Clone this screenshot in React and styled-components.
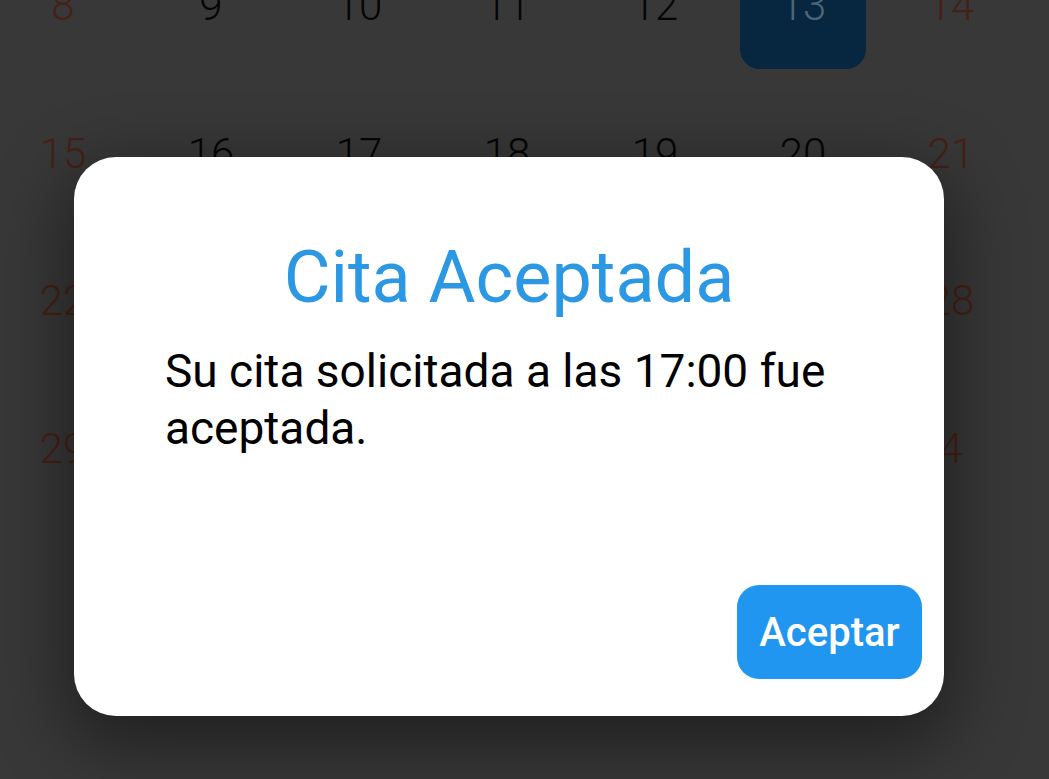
import React from "react";
import styled, { createGlobalStyle } from "styled-components";

const GlobalStyle = createGlobalStyle`
  html, body {
    margin: 0;
    padding: 0;
    background: #383838;
    overflow: hidden;
  }
  * { box-sizing: border-box; }
`;

const Screen = styled.div`
  position: relative;
  width: 1049px;
  height: 779px;
  overflow: hidden;
  background: #383838;
  font-family: Roboto, "Noto Sans", sans-serif;
`;

const Calendar = styled.div`
  display: grid;
  grid-template-columns: repeat(7, 148px);
  grid-auto-rows: 147.5px;
  margin: -68px 0 0 -11px;
`;

const Cell = styled.div`
  display: flex;
  align-items: center;
  justify-content: center;
`;

const Day = styled.div`
  width: 126px;
  height: 126px;
  display: flex;
  align-items: center;
  justify-content: center;
  border-radius: 20px;
  font-size: 42px;
  font-weight: 300;
  background: ${p => (p.selected ? "#072640" : "transparent")};
  color: ${p =>
    p.selected ? "#4d6577" : p.weekend ? "#462016" : "#050505"};
`;

const Dialog = styled.div`
  position: absolute;
  left: 74px;
  top: 157px;
  width: 870px;
  height: 559px;
  background: #ffffff;
  border-radius: 42px;
  box-shadow: 0 22px 70px 10px rgba(0, 0, 0, 0.42);
  display: flex;
  flex-direction: column;
  padding: 78px 22px 37px 91px;
`;

const Title = styled.h1`
  margin: 0 69px 0 0;
  font-size: 72px;
  line-height: 86px;
  font-weight: 400;
  color: #2c97e3;
  text-align: center;
`;

const Message = styled.p`
  margin: 22px 0 0 0;
  font-size: 46px;
  line-height: 57px;
  color: #000000;
  max-width: 700px;
`;

const Actions = styled.div`
  margin-top: auto;
  display: flex;
  justify-content: flex-end;
`;

const Button = styled.button`
  width: 185px;
  height: 94px;
  border: none;
  border-radius: 22px;
  background: #2196f0;
  color: #ffffff;
  font-family: Roboto, "Noto Sans", sans-serif;
  font-size: 40px;
  font-weight: 500;
  cursor: pointer;
`;

const weeks = [
  [8, 9, 10, 11, 12, 13, 14],
  [15, 16, 17, 18, 19, 20, 21],
  [22, 23, 24, 25, 26, 27, 28],
  [29, 30, 31, 1, 2, 3, 4],
];

const App = () => (
  <>
    <GlobalStyle />
    <Screen>
      <Calendar>
        {weeks.map((week, w) =>
          week.map((d, i) => (
            <Cell key={`${w}-${i}`}>
              <Day weekend={i === 0 || i === 6} selected={w === 0 && i === 5}>
                {d}
              </Day>
            </Cell>
          ))
        )}
      </Calendar>
      <Dialog>
        <Title>Cita Aceptada</Title>
        <Message>Su cita solicitada a las 17:00 fue aceptada.</Message>
        <Actions>
          <Button>Aceptar</Button>
        </Actions>
      </Dialog>
    </Screen>
  </>
);

export default App;
